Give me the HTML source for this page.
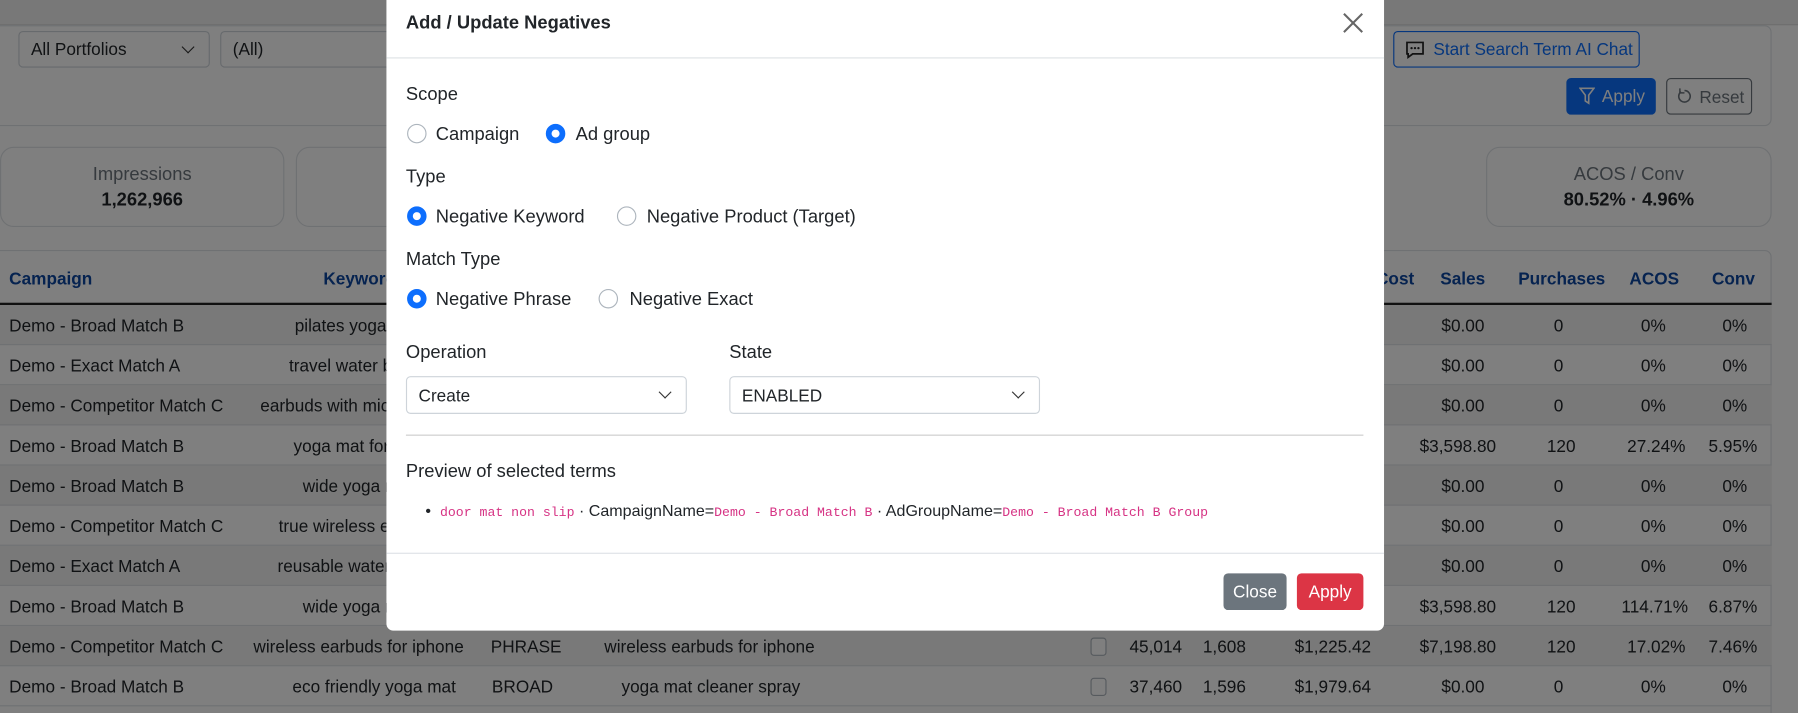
<!DOCTYPE html>
<html><head><meta charset="utf-8"><style>
*{box-sizing:border-box;margin:0;padding:0}
html,body{width:1798px;height:713px;overflow:hidden;background:#fff}
#w{width:1568px;height:622px;position:relative;transform:scale(1.14668);transform-origin:0 0;font-family:"Liberation Sans",sans-serif;color:#212529;font-size:15px;background:#fff}
.a{position:absolute}
.sel{position:absolute;border:1px solid #ced4da;border-radius:4px;background:#fff;padding:7px 10px;font-size:15px}
.chev{position:absolute;right:14px;top:9px;width:8px;height:8px;border-right:1.6px solid #333;border-bottom:1.6px solid #333;transform:rotate(45deg)}
.card{position:absolute;border:1px solid #dee2e6;border-radius:12px;background:#fff;text-align:center}
.th{position:absolute;top:235px;color:#0d47a1;font-weight:bold;font-size:15px}
.row{position:absolute;left:0;width:1545px;height:35px;border-bottom:1px solid #dee2e6}
.row span{position:absolute;top:10px;font-size:15px;white-space:nowrap}
.ov{position:absolute;left:0;top:0;width:1568px;height:622px;background:rgba(0,0,0,.5)}
.m{position:absolute;left:337px;top:0;width:870px;height:550px;background:#fff;border-radius:0 0 6px 6px}
.m .a{white-space:nowrap}
.rad{position:absolute;width:17px;height:17px;border-radius:50%;border:1px solid #adb5bd;background:#fff}
.rad.on{border:5px solid #0d6efd}
.lbl{font-size:16px}
code{font-family:"Liberation Mono",monospace;color:#d63384;font-size:11.5px}
</style></head><body><div id="w">
<div class="a" style="left:0;top:0;width:1568px;height:22px;background:#f0f0f0;border-bottom:1px solid #ddd"></div>
<div class="a" style="left:-10px;top:22px;width:1555px;height:88px;border:1px solid #dee2e6;border-radius:6px"></div>
<div class="sel" style="left:16px;top:27px;width:167px;height:32px">All Portfolios<div class="chev"></div></div>
<div class="sel" style="left:192px;top:27px;width:200px;height:32px">(All)</div>
<div class="a" style="left:1215px;top:27px;width:215px;height:32px;border:1px solid #0d6efd;border-radius:4px;color:#0d6efd;padding:7px 0 0 34px;font-size:15px">Start Search Term AI Chat</div>
<svg class="a" style="left:1225px;top:36px" width="18" height="16" viewBox="0 0 18 16"><path d="M2 1h14v10H7l-4 3v-3H2z" fill="none" stroke="#222" stroke-width="1.5"/><circle cx="6" cy="6" r="1" fill="#222"/><circle cx="9" cy="6" r="1" fill="#222"/><circle cx="12" cy="6" r="1" fill="#222"/></svg>
<div class="a" style="left:1366px;top:68px;width:78px;height:32px;background:#0d6efd;border-radius:4px;color:#fff;padding:8px 0 0 31px;font-size:15px">Apply</div>
<svg class="a" style="left:1377px;top:76px" width="14" height="16" viewBox="0 0 14 16"><path d="M1 1h12L8.5 7v7l-3-2V7z" fill="none" stroke="#fff" stroke-width="1.4"/></svg>
<div class="a" style="left:1453px;top:68px;width:75px;height:32px;border:1px solid #6c757d;border-radius:4px;color:#6c757d;padding:8px 0 0 28px;font-size:15px">Reset</div>
<svg class="a" style="left:1462px;top:77px" width="14" height="14" viewBox="0 0 14 14"><path d="M4 3A5 5 0 1 0 7 2" fill="none" stroke="#6c757d" stroke-width="1.4"/><path d="M3 0v4h4" fill="none" stroke="#6c757d" stroke-width="1.3"/></svg>
<div class="card" style="left:0;top:128px;width:248px;height:70px;padding-top:15px"><div style="color:#6c757d;font-size:16px">Impressions</div><div style="font-weight:bold;font-size:16px;margin-top:4px">1,262,966</div></div>
<div class="card" style="left:258px;top:128px;width:250px;height:70px"></div>
<div class="card" style="left:1296px;top:128px;width:249px;height:70px;padding-top:15px"><div style="color:#6c757d;font-size:16px">ACOS / Conv</div><div style="font-weight:bold;font-size:16px;margin-top:4px">80.52% · 4.96%</div></div>
<div class="a" style="left:-10px;top:218px;width:1555px;height:410px;border:1px solid #dee2e6;border-radius:6px"></div>
<div class="th" style="left:8px">Campaign</div><div class="th" style="left:282px">Keyword</div>
<div class="th" style="left:1200px">Cost</div><div class="th" style="left:1256px">Sales</div><div class="th" style="left:1324px">Purchases</div><div class="th" style="left:1421px">ACOS</div><div class="th" style="left:1493px">Conv</div>
<div class="a" style="left:0;top:264px;width:1545px;height:2px;background:#222"></div>
<div class="row" style="top:266px;background:#f2f2f2"><span style="left:8px">Demo - Broad Match B</span><span style="left:257px">pilates yoga mat</span><span style="left:1257px">$0.00</span><span style="left:1355px">0</span><span style="left:1431px">0%</span><span style="left:1502px">0%</span></div>
<div class="row" style="top:301px"><span style="left:8px">Demo - Exact Match A</span><span style="left:252px">travel water bottle</span><span style="left:1257px">$0.00</span><span style="left:1355px">0</span><span style="left:1431px">0%</span><span style="left:1502px">0%</span></div>
<div class="row" style="top:336px;background:#f2f2f2"><span style="left:8px">Demo - Competitor Match C</span><span style="left:227px">earbuds with mic</span><span style="left:1257px">$0.00</span><span style="left:1355px">0</span><span style="left:1431px">0%</span><span style="left:1502px">0%</span></div>
<div class="row" style="top:371px"><span style="left:8px">Demo - Broad Match B</span><span style="left:256px">yoga mat for beginners</span><span style="left:1238px">$3,598.80</span><span style="left:1349px">120</span><span style="left:1419px">27.24%</span><span style="left:1490px">5.95%</span></div>
<div class="row" style="top:406px;background:#f2f2f2"><span style="left:8px">Demo - Broad Match B</span><span style="left:264px">wide yoga mat</span><span style="left:1257px">$0.00</span><span style="left:1355px">0</span><span style="left:1431px">0%</span><span style="left:1502px">0%</span></div>
<div class="row" style="top:441px"><span style="left:8px">Demo - Competitor Match C</span><span style="left:243px">true wireless earbuds</span><span style="left:1257px">$0.00</span><span style="left:1355px">0</span><span style="left:1431px">0%</span><span style="left:1502px">0%</span></div>
<div class="row" style="top:476px;background:#f2f2f2"><span style="left:8px">Demo - Exact Match A</span><span style="left:242px">reusable water bottle</span><span style="left:1257px">$0.00</span><span style="left:1355px">0</span><span style="left:1431px">0%</span><span style="left:1502px">0%</span></div>
<div class="row" style="top:511px"><span style="left:8px">Demo - Broad Match B</span><span style="left:264px">wide yoga mat</span><span style="left:1238px">$3,598.80</span><span style="left:1349px">120</span><span style="left:1414px">114.71%</span><span style="left:1490px">6.87%</span></div>
<div class="row" style="top:546px;background:#f2f2f2"><span style="left:8px">Demo - Competitor Match C</span><span style="left:221px">wireless earbuds for iphone</span><span style="left:428px">PHRASE</span><span style="left:527px">wireless earbuds for iphone</span><span style="left:951px;top:10px;width:14px;height:16px;border:1px solid #adb5bd;border-radius:3px;background:#fff"></span><span style="left:985px">45,014</span><span style="left:1049px">1,608</span><span style="left:1129px">$1,225.42</span><span style="left:1238px">$7,198.80</span><span style="left:1349px">120</span><span style="left:1419px">17.02%</span><span style="left:1490px">7.46%</span></div>
<div class="row" style="top:581px"><span style="left:8px">Demo - Broad Match B</span><span style="left:255px">eco friendly yoga mat</span><span style="left:429px">BROAD</span><span style="left:542px">yoga mat cleaner spray</span><span style="left:951px;top:10px;width:14px;height:16px;border:1px solid #adb5bd;border-radius:3px;background:#fff"></span><span style="left:985px">37,460</span><span style="left:1049px">1,596</span><span style="left:1129px">$1,979.64</span><span style="left:1257px">$0.00</span><span style="left:1355px">0</span><span style="left:1431px">0%</span><span style="left:1502px">0%</span></div>
<div class="ov"></div>
<div class="m">
<div class="a" style="left:17px;top:12px;font-size:16px;font-weight:bold">Add / Update Negatives</div>
<svg class="a" style="left:834px;top:11px" width="18" height="18" viewBox="0 0 18 18"><path d="M1 1L17 17M17 1L1 17" stroke="#666" stroke-width="1.8"/></svg>
<div class="a" style="left:0;top:50px;width:870px;height:1px;background:#dee2e6"></div>
<div class="a lbl" style="left:17px;top:74px">Scope</div>
<div class="rad" style="left:18px;top:108px"></div><div class="a lbl" style="left:43px;top:109px">Campaign</div>
<div class="rad on" style="left:139px;top:108px"></div><div class="a lbl" style="left:165px;top:109px">Ad group</div>
<div class="a lbl" style="left:17px;top:146px">Type</div>
<div class="rad on" style="left:18px;top:180px"></div><div class="a lbl" style="left:43px;top:181px">Negative Keyword</div>
<div class="rad" style="left:201px;top:180px"></div><div class="a lbl" style="left:227px;top:181px">Negative Product (Target)</div>
<div class="a lbl" style="left:17px;top:218px">Match Type</div>
<div class="rad on" style="left:18px;top:252px"></div><div class="a lbl" style="left:43px;top:253px">Negative Phrase</div>
<div class="rad" style="left:185px;top:252px"></div><div class="a lbl" style="left:212px;top:253px">Negative Exact</div>
<div class="a lbl" style="left:17px;top:299px">Operation</div>
<div class="a lbl" style="left:299px;top:299px">State</div>
<div class="sel" style="left:17px;top:328px;width:245px;height:33px;padding-top:8px">Create<div class="chev"></div></div>
<div class="sel" style="left:299px;top:328px;width:271px;height:33px;padding-top:8px">ENABLED<div class="chev"></div></div>
<div class="a" style="left:17px;top:379px;width:835px;height:1px;background:#ccc"></div>
<div class="a lbl" style="left:17px;top:403px">Preview of selected terms</div>
<div class="a" style="left:34px;top:437px;font-size:14px">• &nbsp;<code>door mat non slip</code> · CampaignName=<code>Demo - Broad Match B</code> · AdGroupName=<code>Demo - Broad Match B Group</code></div>
<div class="a" style="left:0;top:482px;width:870px;height:1px;background:#dee2e6"></div>
<div class="a" style="left:730px;top:500px;width:55px;height:32px;background:#6c757d;border-radius:4px;color:#fff;font-size:15px;padding-top:8px;text-align:center">Close</div>
<div class="a" style="left:794px;top:500px;width:58px;height:32px;background:#dc3545;border-radius:4px;color:#fff;font-size:15px;padding-top:8px;text-align:center">Apply</div>
</div>
</div></body></html>
